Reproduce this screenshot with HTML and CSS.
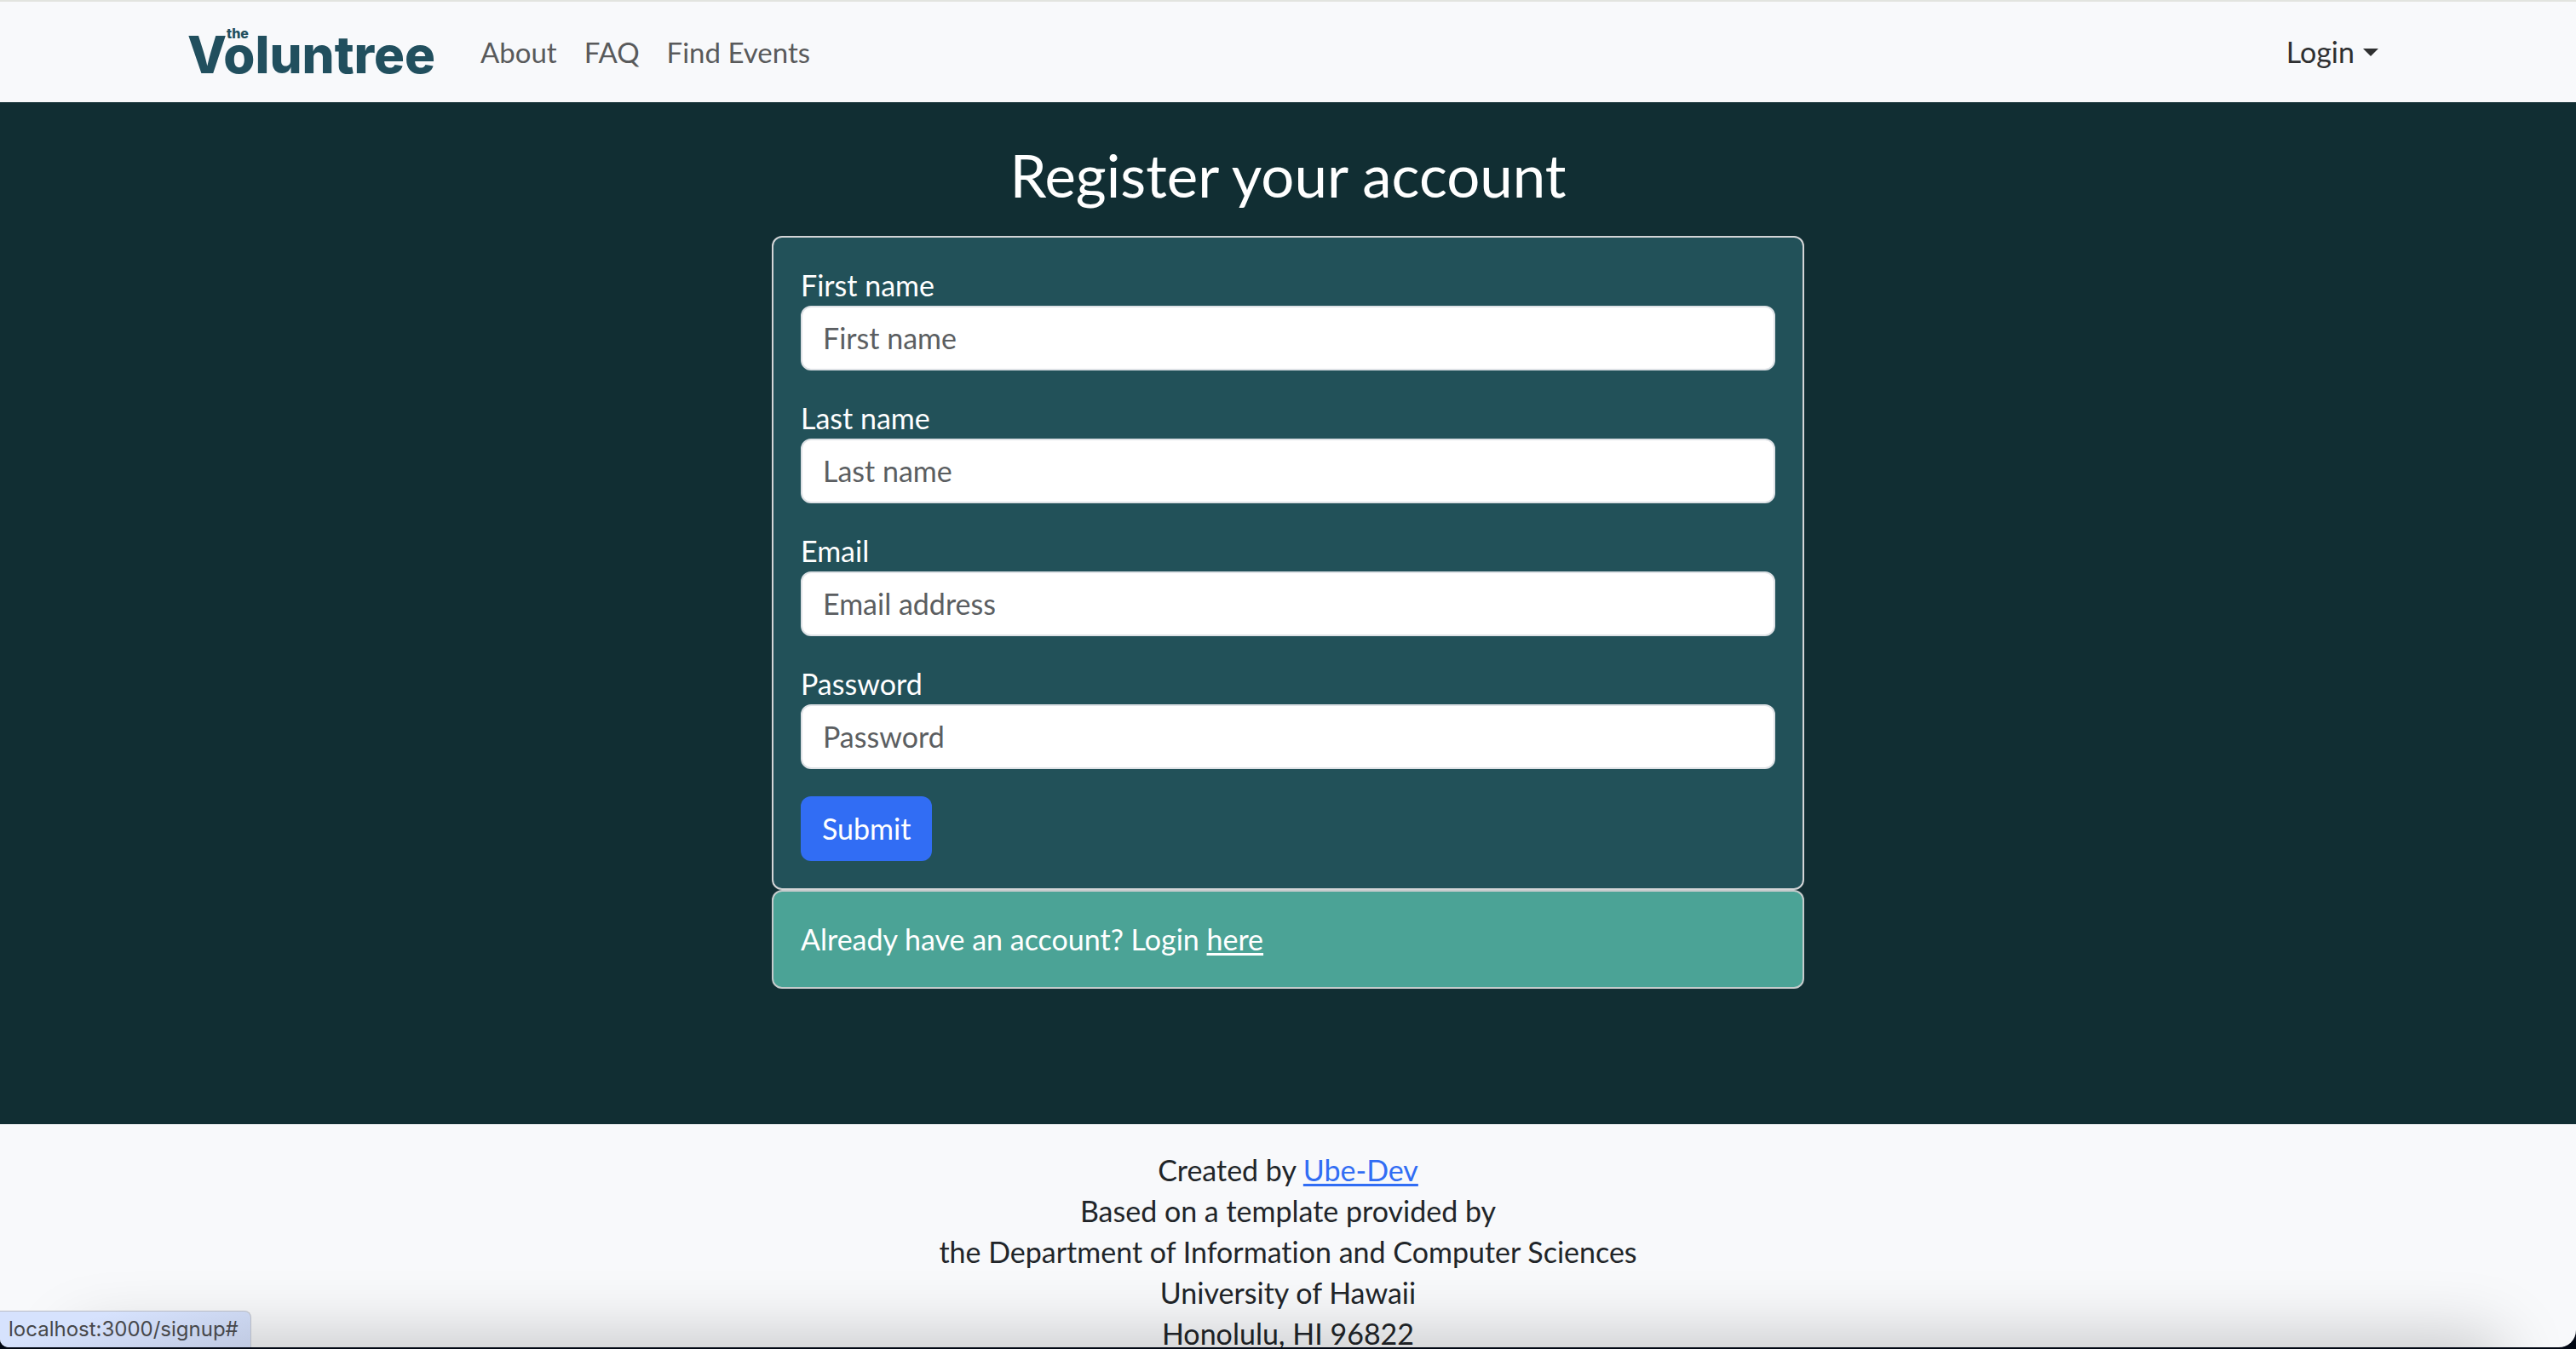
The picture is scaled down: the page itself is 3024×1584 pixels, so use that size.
FILE: index.html
```html
<!DOCTYPE html>
<html lang="en">
<head>
<meta charset="utf-8">
<title>The Voluntree</title>
<link rel="stylesheet" href="styles.css">
</head>
<body>
<div class="page">
  <header class="navbar">
    <div class="container">
      <a class="brand" href="#"><span class="brand-the">the</span>Voluntree</a>
      <nav class="nav">
        <a class="nav-link" href="#">About</a>
        <a class="nav-link" href="#">FAQ</a>
        <a class="nav-link" href="#">Find Events</a>
      </nav>
      <button class="login" type="button">Login <span class="caret"></span></button>
    </div>
  </header>
  <main class="main">
    <div class="column">
      <h1 class="title">Register your account</h1>
      <form class="card">
        <div class="field"><label for="first">First name</label><input id="first" type="text" placeholder="First name"></div>
        <div class="field"><label for="last">Last name</label><input id="last" type="text" placeholder="Last name"></div>
        <div class="field"><label for="email">Email</label><input id="email" type="email" placeholder="Email address"></div>
        <div class="field"><label for="password">Password</label><input id="password" type="password" placeholder="Password"></div>
        <button class="submit" type="submit">Submit</button>
      </form>
      <p class="card card-login">Already have an account? Login <a href="#">here</a></p>
    </div>
  </main>
  <footer class="footer">
    <p>Created by <a href="#">Ube-Dev</a></p>
    <p>Based on a template provided by</p>
    <p>the Department of Information and Computer Sciences</p>
    <p>University of Hawaii</p>
    <p>Honolulu, HI 96822</p>
  </footer>
  <div class="shade"></div>
  <div class="status">localhost:3000/signup#</div>
</div>
</body>
</html>
```

FILE: styles.css
```css
* {
  box-sizing: border-box;
}

body {
  margin: 0;
  height: 100vh;
  padding-bottom: 2px;
  overflow: hidden;
  background: #020814;
  color: #212529;
  font: 400 34px/48px Lato, sans-serif;
  font-variant-ligatures: none;
}

h1,
p {
  margin: 0;
}

button,
input {
  font: inherit;
}

.page {
  position: relative;
  display: flex;
  flex-direction: column;
  height: 100%;
  overflow: hidden;
  border-radius: 0 0 20px 10px;
  background: #f8f9fb;
}

.navbar {
  flex: none;
  border-top: 2px solid #e2e4df;
  background: #f8f9fb;
}

.container {
  display: flex;
  align-items: center;
  max-width: 2640px;
  height: 118px;
  margin: 0 auto;
  padding: 0 24px;
}

.brand {
  position: relative;
  min-width: 296px;
  margin: 0 32px 0 4px;
  padding-top: 6px;
  color: #214f5e;
  font-family: Inter, sans-serif;
  font-size: 60px;
  font-weight: 800;
  line-height: 68px;
  text-decoration: none;
}

.brand-the {
  position: absolute;
  top: 7px;
  left: 46px;
  font-size: 16px;
  line-height: 16px;
}

.nav {
  display: flex;
}

.nav-link {
  padding: 16px;
  color: #595a5b;
  font-size: 33px;
  text-decoration: none;
}

.login {
  display: flex;
  align-items: center;
  gap: 10px;
  margin-left: auto;
  padding: 16px;
  border: 0;
  background: none;
  color: #2f3031;
}

.caret {
  border: 9px solid transparent;
  border-top-color: currentColor;
  border-bottom: 0;
}

.main {
  flex: none;
  padding: 48px 0 159px;
  background: #112e33;
}

.column {
  width: 41.6667%;
  margin: 0 auto;
  padding: 0 24px;
}

.title {
  margin-bottom: 33px;
  color: #fff;
  font-size: 69px;
  font-weight: 400;
  line-height: 76px;
  text-align: center;
}

.card {
  padding: 32px;
  border: 2px solid #d3d5d7;
  border-radius: 12px;
  background: #225159;
  color: #fff;
}

.card-login {
  border-color: #c5cbcc;
  background: #4ba396;
}

.card-login a {
  color: inherit;
}

.field {
  display: flex;
  flex-direction: column;
  margin-bottom: 32px;
}

.field input {
  width: 100%;
  height: 76px;
  padding: 0 24px 2px;
  border: 2px solid #dee2e6;
  border-radius: 12px;
  background: #fff;
}

.field input::placeholder {
  color: #5b5e61;
  opacity: 1;
}

.submit {
  display: block;
  height: 76px;
  padding: 0 25px;
  border: 0;
  border-radius: 12px;
  background: #316df4;
  color: #fff;
}

.footer {
  padding-top: 30px;
  text-align: center;
}

.footer a {
  color: #316df4;
}

a {
  text-decoration-thickness: 3px;
  text-underline-offset: 3px;
}

.shade {
  position: absolute;
  right: 100px;
  bottom: -60px;
  left: 100px;
  height: 60px;
  box-shadow: 0 0 80px 10px rgb(0 0 0 / 22%);
}

.status {
  position: absolute;
  bottom: 0;
  left: 0;
  padding: 0 14px 0 10px;
  border: 1px solid #b9bcc4;
  border-width: 1px 1px 0 0;
  border-radius: 0 8px 0 0;
  background: linear-gradient(165deg, #d6e2fd 30%, #c0cae2);
  color: #47484b;
  font: 400 24px/42px Inter, sans-serif;
}
```
